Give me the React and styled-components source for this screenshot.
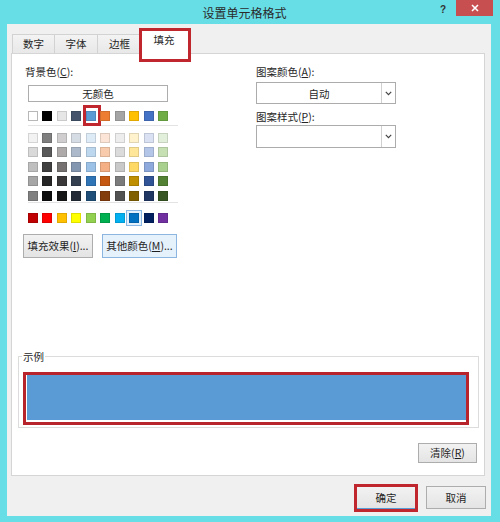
import React from 'react';
import styled, { createGlobalStyle } from 'styled-components';

const GlobalStyle = createGlobalStyle`
  body {
    margin: 0;
    background: #67dee6;
    font-family: "Noto Sans CJK SC", "Microsoft YaHei", sans-serif;
    color: #262626;
  }
`;

const themeColors = ['#FFFFFF', '#000000', '#E7E6E6', '#44546A', '#5B9BD5', '#ED7D31', '#A5A5A5', '#FFC000', '#4472C4', '#70AD47'];
const tintRows = [
  ['#F2F2F2', '#7F7F7F', '#D0CECE', '#D6DCE4', '#DDEBF7', '#FCE4D6', '#EDEDED', '#FFF2CC', '#D9E1F2', '#E2EFDA'],
  ['#D9D9D9', '#595959', '#AEAAAA', '#ACB9CA', '#BDD7EE', '#F8CBAD', '#DBDBDB', '#FFE699', '#B4C6E7', '#C6E0B4'],
  ['#BFBFBF', '#404040', '#757171', '#8497B0', '#9BC2E6', '#F4B084', '#C9C9C9', '#FFD966', '#8EA9DB', '#A9D08E'],
  ['#A6A6A6', '#262626', '#3A3838', '#333F4F', '#2F75B5', '#C65911', '#7B7B7B', '#BF8F00', '#305496', '#548235'],
  ['#808080', '#0D0D0D', '#161616', '#222B35', '#1F4E78', '#833C0C', '#525252', '#806000', '#203764', '#375623'],
];
const standardColors = ['#C00000', '#FF0000', '#FFC000', '#FFFF00', '#92D050', '#00B050', '#00B0F0', '#0070C0', '#002060', '#7030A0'];

const Window = styled.div`
  width: 500px;
  height: 522px;
  display: flex;
  flex-direction: column;
  background: #67dee6;
`;

const TitleBar = styled.div`
  height: 24px;
  display: grid;
  grid-template-columns: 1fr auto 1fr;
  align-items: start;
  padding-right: 7px;
`;

const Title = styled.div`
  grid-column: 2;
  font-size: 12px;
  line-height: 26px;
  color: #2a2a2a;
  padding-right: 4px;
`;

const Controls = styled.div`
  grid-column: 3;
  justify-self: end;
  display: flex;
  align-items: flex-start;
`;

const Help = styled.span`
  font-family: "Liberation Sans", sans-serif;
  font-weight: bold;
  font-size: 10px;
  line-height: 20px;
  width: 14px;
  color: #333;
  margin-right: 2px;
`;

const CloseButton = styled.div`
  width: 37px;
  height: 16px;
  background: #c74f4f;
  display: flex;
  align-items: center;
  justify-content: center;
`;

const Client = styled.div`
  flex: 1;
  margin: 0 9px 6px 7px;
  background: #f0f0f0;
  display: flex;
  flex-direction: column;
`;

const TabStrip = styled.div`
  height: 29px;
  display: flex;
  align-items: flex-end;
  padding-left: 5px;
  box-sizing: border-box;
`;

const Tab = styled.div`
  position: relative;
  box-sizing: border-box;
  height: ${p => (p.$active ? 26 : 20)}px;
  width: ${p => p.$w}px;
  margin: 0 ${p => (p.$active ? -2 : 0)}px -1px;
  padding-top: ${p => (p.$active ? 4 : 2)}px;
  text-align: center;
  font-size: 10.5px;
  line-height: 14px;
  background: ${p => (p.$active ? '#fff' : 'linear-gradient(#f3f3f3, #e8e8e8)')};
  border: 1px solid #d2d2d2;
  border-bottom: ${p => (p.$active ? 'none' : '1px solid #d2d2d2')};
  border-right: ${p => (p.$active || p.$last ? '1px solid #d2d2d2' : 'none')};
  z-index: ${p => (p.$active ? 2 : 1)};

  ${p => p.$marked && `
    &::after {
      content: '';
      position: absolute;
      left: -1px;
      right: -3px;
      top: -1px;
      bottom: -8px;
      border: 3px solid #c0262e;
    }
  `}
`;

const Panel = styled.div`
  margin-left: 4px;
  width: 474px;
  height: 423px;
  box-sizing: border-box;
  background: #fff;
  border: 1px solid #d5d5d5;
  display: flex;
  flex-direction: column;
  position: relative;
  z-index: 1;
`;

const TopSection = styled.div`
  display: flex;
  padding: 11px 0 0 11px;
`;

const LeftCol = styled.div`
  width: 233px;
  display: flex;
  flex-direction: column;
`;

const RightCol = styled.div`
  width: 140px;
  display: flex;
  flex-direction: column;
`;

const Label = styled.div`
  font-size: 10.5px;
  line-height: 14px;
  margin-left: ${p => p.$indent || 0}px;
  margin-top: ${p => p.$top || 0}px;
  u { text-decoration: underline; }
`;

const Palette = styled.div`
  width: 140px;
  margin-left: 5px;
  margin-top: 6px;
  display: flex;
  flex-direction: column;
`;

const NoColorButton = styled.div`
  height: 17px;
  box-sizing: border-box;
  border: 1px solid #adadad;
  background: #fff;
  font-size: 10.5px;
  line-height: 15px;
  text-align: center;
`;

const SwatchRow = styled.div`
  display: flex;
  justify-content: space-between;
  margin-top: ${p => p.$top || 0}px;
`;

const SwatchGrid = styled.div`
  display: flex;
  flex-direction: column;
  gap: 4.4px;
`;

const Swatch = styled.div`
  position: relative;
  width: 10px;
  height: 10px;
  box-sizing: border-box;
  background: ${p => p.$color};
  border: 1px solid ${p => (p.$color === '#FFFFFF' ? '#b8b8b8' : 'rgba(0,0,0,0.12)')};
  ${p => p.$selected && `box-shadow: 0 0 0 2px #e4f0fb, 0 0 0 3px #8ab8e4;`}
  ${p => p.$marked && `
    &::after {
      content: '';
      position: absolute;
      left: -4px;
      right: -6px;
      top: -7px;
      bottom: -6px;
      border: 3px solid #c0262e;
    }
  `}
`;

const Separator = styled.div`
  width: 150px;
  height: 1px;
  background: #e3e3e3;
  margin: ${p => p.$m};
`;

const ButtonRow = styled.div`
  display: flex;
  gap: 9px;
  margin-top: 11px;
`;

const Button = styled.div`
  position: relative;
  box-sizing: border-box;
  width: ${p => p.$w}px;
  height: ${p => p.$h || 24}px;
  border: 1px solid ${p => (p.$hover ? '#8cb6e0' : p.$default ? '#5b9bd5' : '#adadad')};
  background: ${p => (p.$hover ? '#e5f1fb' : 'linear-gradient(#f2f2f2, #e4e4e4)')};
  font-size: 10.5px;
  display: flex;
  align-items: center;
  justify-content: center;
  color: #1f1f1f;
  u { text-decoration: underline; }

  ${p => p.$marked && `
    &::after {
      content: '';
      position: absolute;
      left: -3px;
      right: -3px;
      top: -3px;
      bottom: -4px;
      border: 3px solid #c0262e;
    }
  `}
`;

const Select = styled.div`
  display: flex;
  height: ${p => p.$h}px;
  margin-top: ${p => p.$top}px;
  box-sizing: border-box;
  border: 1px solid #acacac;
  background: #fff;
`;

const SelectValue = styled.div`
  flex: 1;
  font-size: 10.5px;
  display: flex;
  align-items: center;
  justify-content: center;
`;

const SelectArrow = styled.div`
  width: 13px;
  border-left: 1px solid #d0d0d0;
  display: flex;
  align-items: center;
  justify-content: center;
`;

const SampleGroup = styled.fieldset`
  margin: 92px 5px 0 6px;
  padding: 0 12px 7px 3px;
  border: 1px solid #dcdcdc;
  min-width: 0;

  legend {
    padding: 0 1px;
    font-size: 10.5px;
    line-height: 14px;
  }
`;

const SampleFill = styled.div`
  position: relative;
  height: 47px;
  margin: 9px 0 0 5px;
  background: #5b9bd5;

  &::after {
    content: '';
    position: absolute;
    left: -4px;
    right: -3px;
    top: -1px;
    bottom: -5px;
    border: 3px solid #b8242c;
  }
`;

const ClearRow = styled.div`
  display: flex;
  justify-content: flex-end;
  padding: 15px 7px 0 0;
`;

const Footer = styled.div`
  display: flex;
  justify-content: flex-end;
  gap: 10px;
  padding: 10px 5px 0 0;
`;

function Chevron() {
  return (
    <svg width="7" height="5" viewBox="0 0 7 5">
      <path d="M0.8 0.8 L3.5 3.6 L6.2 0.8" fill="none" stroke="#444" strokeWidth="1.2" />
    </svg>
  );
}

export default function App() {
  return (
    <>
      <GlobalStyle />
      <Window>
        <TitleBar>
          <Title>设置单元格格式</Title>
          <Controls>
            <Help>?</Help>
            <CloseButton>
              <svg width="8" height="8" viewBox="0 0 8 8">
                <path d="M1 1 L7 7 M7 1 L1 7" stroke="#fff" strokeWidth="1.6" />
              </svg>
            </CloseButton>
          </Controls>
        </TitleBar>
        <Client>
          <TabStrip>
            <Tab $w={42}>数字</Tab>
            <Tab $w={43}>字体</Tab>
            <Tab $w={44}>边框</Tab>
            <Tab $w={50} $active $marked>填充</Tab>
          </TabStrip>
          <Panel>
            <TopSection>
              <LeftCol>
                <Label $indent={2}>背景色(<u>C</u>):</Label>
                <Palette>
                  <NoColorButton>无颜色</NoColorButton>
                  <SwatchRow $top={9}>
                    {themeColors.map((c, i) => (
                      <Swatch key={c} $color={c} $marked={i === 4} />
                    ))}
                  </SwatchRow>
                  <Separator $m="4px 0 7px" />
                  <SwatchGrid>
                    {tintRows.map((row, r) => (
                      <SwatchRow key={r}>
                        {row.map(c => <Swatch key={c} $color={c} />)}
                      </SwatchRow>
                    ))}
                  </SwatchGrid>
                  <Separator $m="1.5px 0 9.5px" />
                  <SwatchRow>
                    {standardColors.map((c, i) => (
                      <Swatch key={c} $color={c} $selected={i === 7} />
                    ))}
                  </SwatchRow>
                </Palette>
                <ButtonRow>
                  <Button $w={70}>填充效果(<u>I</u>)...</Button>
                  <Button $w={75} $hover>其他颜色(<u>M</u>)...</Button>
                </ButtonRow>
              </LeftCol>
              <RightCol>
                <Label>图案颜色(<u>A</u>):</Label>
                <Select $h={22} $top={3}>
                  <SelectValue>自动</SelectValue>
                  <SelectArrow><Chevron /></SelectArrow>
                </Select>
                <Label $top={6}>图案样式(<u>P</u>):</Label>
                <Select $h={23} $top={1}>
                  <SelectValue />
                  <SelectArrow><Chevron /></SelectArrow>
                </Select>
              </RightCol>
            </TopSection>
            <SampleGroup>
              <legend>示例</legend>
              <SampleFill />
            </SampleGroup>
            <ClearRow>
              <Button $w={59} $h={20}>清除(<u>R</u>)</Button>
            </ClearRow>
          </Panel>
          <Footer>
            <Button $w={60} $h={23} $default $marked>确定</Button>
            <Button $w={60} $h={23}>取消</Button>
          </Footer>
        </Client>
      </Window>
    </>
  );
}
